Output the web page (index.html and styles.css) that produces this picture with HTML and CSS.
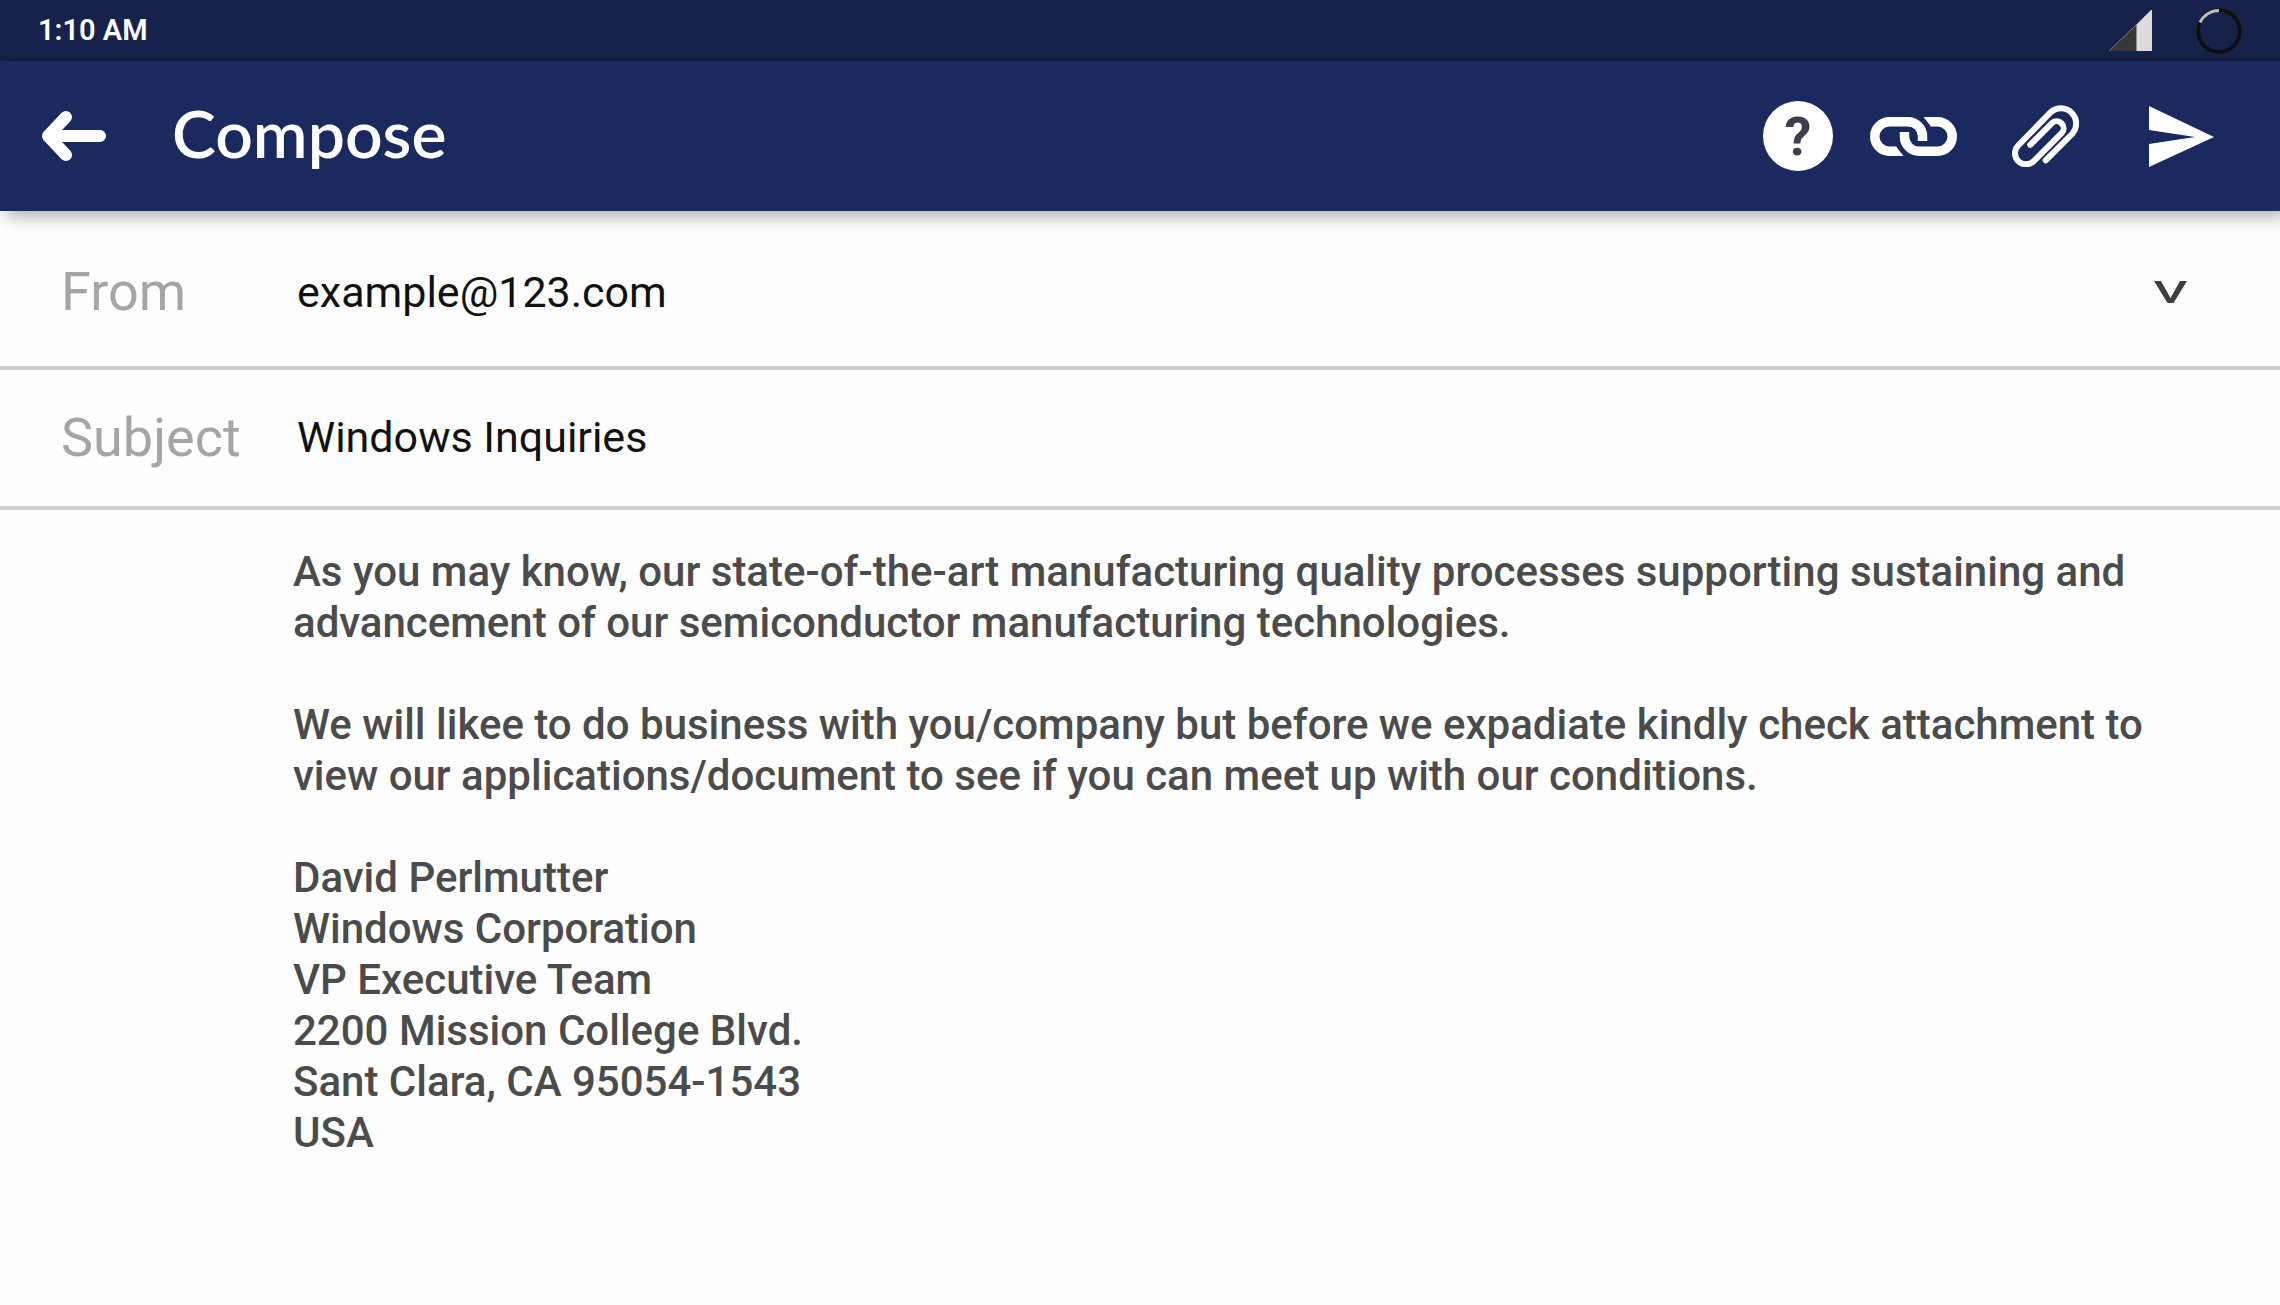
FILE: index.html
```html
<!DOCTYPE html>
<html lang="en">
<head>
<meta charset="utf-8">
<meta name="viewport" content="width=device-width, initial-scale=1">
<title>Compose</title>
<link rel="stylesheet" href="styles.css">
</head>
<body>
<div class="status-bar">
  <span class="clock">1:10 AM</span>
  <div class="status-icons">
    <svg width="43" height="41" viewBox="0 0 43 41" aria-hidden="true">
      <path d="M0 41L27 15V41Z" fill="#383838"/>
      <path d="M0 41L27 15" stroke="#77797f" fill="none"/>
      <path d="M27 15L42 0H43V41H27Z" fill="#dcdcdc"/>
      <path d="M27.500 15V41" stroke="#8c8c8c" fill="none"/>
    </svg>
    <svg width="46" height="46" viewBox="0 0 46 46" aria-hidden="true">
      <circle cx="23" cy="23" r="22.500" fill="none" stroke="#4a4d58"/>
      <circle cx="23" cy="23" r="21" fill="none" stroke="#0e0e10" stroke-width="4"/>
      <path d="M4 14.500A21 21 0 0 1 23 2.500" fill="none" stroke="#bcbcbc" stroke-width="3"/>
    </svg>
  </div>
</div>
<header class="app-bar">
  <button class="icon-button back" type="button" aria-label="Back">
    <svg width="64" height="50" viewBox="0 0 64 50" aria-hidden="true">
      <path d="M58 25H10M24 6L6 25L24 44" fill="none" stroke="#fff" stroke-width="12" stroke-linecap="round" stroke-linejoin="round"/>
      <path d="M6 25L20 12V38Z" fill="#fff"/>
    </svg>
  </button>
  <h1 class="title">Compose</h1>
  <div class="actions">
    <button class="help" type="button" aria-label="Help">?</button>
    <button class="icon-button link" type="button" aria-label="Insert link">
      <svg width="87" height="39" viewBox="0 0 87 39" aria-hidden="true">
        <g id="ring">
          <path d="M26.500 34.250H19.500A14.750 14.750 0 0 1 19.500 4.750H38A14.500 14.500 0 0 1 52.500 19.250V24" fill="none" stroke="#fff" stroke-width="9.500"/>
          <path d="M26 29.500L33.500 39H26Z" fill="#fff"/>
        </g>
        <use href="#ring" transform="rotate(180 43.500 19.500)"/>
      </svg>
    </button>
    <button class="icon-button attach" type="button" aria-label="Attach file">
      <svg width="68" height="62" viewBox="0 0 68 62" aria-hidden="true">
        <path d="M34.700 55.300L61.300 28.800A15.300 15.300 0 0 0 39.700 7.200L7.200 40.500A11 11 0 0 0 22.800 56.100L50.600 28.200A7 7 0 0 0 40.700 18.300L19.200 39.800" fill="none" stroke="#fff" stroke-width="6" stroke-linecap="round"/>
      </svg>
    </button>
    <button class="icon-button send" type="button" aria-label="Send">
      <svg width="65" height="61" viewBox="0 0 65 61" aria-hidden="true">
        <path d="M0 0L65 31L0 61V38L46 31L0 24Z" fill="#fff"/>
      </svg>
    </button>
  </div>
</header>
<main class="compose">
  <div class="field">
    <label class="label" for="from">From</label>
    <select class="value" id="from"><option>example@123.com</option></select>
    <svg class="chevron" width="33" height="22" viewBox="0 0 33 22" aria-hidden="true">
      <path d="M0 0H7L16.500 17L26 0H33L19.500 22H13.500Z" fill="#3f3f3f"/>
    </svg>
  </div>
  <div class="field">
    <label class="label" for="subject">Subject</label>
    <input class="value" id="subject" type="text" value="Windows Inquiries">
  </div>
  <textarea class="message" aria-label="Message" rows="14" spellcheck="false">As you may know, our state-of-the-art manufacturing quality processes supporting sustaining and
advancement of our semiconductor manufacturing technologies.

We will likee to do business with you/company but before we expadiate kindly check attachment to
view our applications/document to see if you can meet up with our conditions.

David Perlmutter
Windows Corporation
VP Executive Team
2200 Mission College Blvd.
Sant Clara, CA 95054-1543
USA</textarea>
</main>
</body>
</html>
```
FILE: styles.css
```css
* {
  box-sizing: border-box;
}

body {
  margin: 0;
  min-height: 100vh;
  background: #fefefe;
  font-family: Roboto, "Liberation Sans", sans-serif;
}

button,
input,
select,
textarea {
  margin: 0;
  padding: 0;
  border: 0;
  background: none;
  font-family: inherit;
}

svg {
  display: block;
}

.status-bar {
  display: flex;
  align-items: center;
  justify-content: space-between;
  height: 61px;
  padding: 0 38px;
  background: linear-gradient(#17224b 54px, #151d40 61px);
}

.clock {
  padding-bottom: 2px;
  color: #fff;
  font-size: 29px;
  font-weight: 600;
}

.status-icons {
  display: flex;
  align-items: center;
  gap: 44px;
}

.app-bar {
  display: flex;
  align-items: center;
  height: 150px;
  padding: 0 51px 0 42px;
  background: #1b2a5e;
  box-shadow: 6px 6px 16px rgba(0, 0, 0, 0.3);
}

.icon-button {
  display: flex;
  align-items: center;
  justify-content: center;
}

.title {
  margin: 0 0 0 66px;
  padding-bottom: 8px;
  color: #fff;
  font-family: Lato, sans-serif;
  font-size: 66px;
  font-weight: 600;
}

.actions {
  display: flex;
  align-items: center;
  gap: 36px;
  margin-left: auto;
}

.help {
  width: 70px;
  height: 70px;
  padding-top: 2px;
  border-radius: 50%;
  background: #fff;
  color: #3c3e4e;
  font-size: 54px;
  font-weight: 700;
  line-height: 68px;
}

.link {
  width: 88px;
}

.attach {
  width: 104px;
}

.send {
  width: 96px;
}

.compose {
  padding-top: 8px;
}

.field {
  display: grid;
  grid-template-columns: 236px 1fr;
  align-items: center;
  height: 140px;
  padding: 0 93px 2px 61px;
  border-bottom: 4px solid #cdcdcd;
}

.field:first-child {
  height: 151px;
}

.label {
  color: #a5a5a5;
  font-size: 54px;
}

.value {
  grid-area: 1 / 2;
  width: 100%;
  height: 64px;
  appearance: none;
  color: #111;
  font-size: 43px;
}

.chevron {
  grid-area: 1 / 2;
  justify-self: end;
  pointer-events: none;
}

.message {
  display: block;
  width: 100%;
  padding: 36px 40px 0 293px;
  outline: 0;
  resize: none;
  color: #4b4b4b;
  font-size: 42px;
  font-weight: 500;
  line-height: 51px;
}
```
